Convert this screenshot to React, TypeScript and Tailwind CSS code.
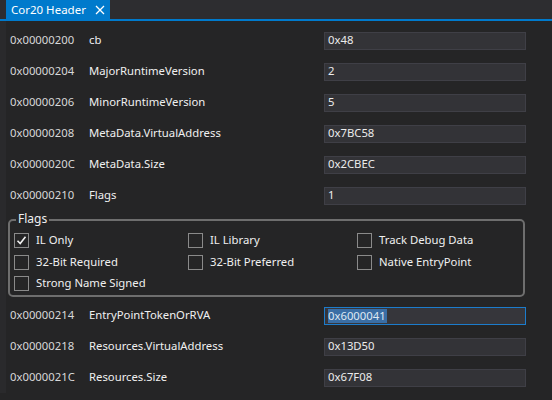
import React from "react";

const top = [
  ["0x00000200", "cb", "0x48"],
  ["0x00000204", "MajorRuntimeVersion", "2"],
  ["0x00000206", "MinorRuntimeVersion", "5"],
  ["0x00000208", "MetaData.VirtualAddress", "0x7BC58"],
  ["0x0000020C", "MetaData.Size", "0x2CBEC"],
  ["0x00000210", "Flags", "1"],
];
const bottom = [
  ["0x00000214", "EntryPointTokenOrRVA", "0x6000041"],
  ["0x00000218", "Resources.VirtualAddress", "0x13D50"],
  ["0x0000021C", "Resources.Size", "0x67F08"],
];

function Row({ r, selected }: { r: string[]; selected?: boolean }) {
  return (
    <div className="flex h-[31px] items-center">
      <div className="w-[83px] pl-[4px] text-[#d8d8d8]">{r[0]}</div>
      <div className="w-[235px] text-[#f0f0f0]">{r[1]}</div>
      <div
        className={
          "flex h-[18px] w-[202px] items-center border px-[3px] " +
          (selected ? "border-[#1c7ccc] bg-[#36363b]" : "border-[#3f3f46] bg-[#333337]")
        }
      >
        {selected ? (
          <span className="bg-[#3a6ea5] pr-[1px] leading-[14px] text-[#dfe8f2]">{r[2]}</span>
        ) : (
          <span className="text-[#ececec]">{r[2]}</span>
        )}
      </div>
    </div>
  );
}

function Check({ label, checked }: { label: string; checked?: boolean }) {
  return (
    <div className="flex h-[21.5px] items-center">
      <div className="flex h-[15px] w-[15px] items-center justify-center border border-[#8a8a8a]">
        {checked && (
          <svg width="11" height="11" viewBox="0 0 11 11">
            <path d="M1.5 5.8 L4.2 8.5 L9.5 1.8" stroke="#f0f0f0" strokeWidth="1.6" fill="none" />
          </svg>
        )}
      </div>
      <span className="ml-[7px] text-[#f0f0f0]">{label}</span>
    </div>
  );
}

export default function App() {
  return (
    <div
      className="relative h-[400px] w-[552px] overflow-hidden bg-[#252526] text-[11.3px]"
      style={{ fontFamily: '"Segoe UI", "Noto Sans", sans-serif' }}
    >
      <div className="flex h-[19px] bg-[#2d2d30]">
        <div className="w-[6px]" />
        <div className="flex w-[104px] items-center bg-[#007acc] pl-[5px] text-[11.5px] text-white">
          <span>Cor20 Header</span>
          <svg className="ml-[9px]" width="10" height="10" viewBox="0 0 10 10">
            <path d="M1 1 L9 9 M9 1 L1 9" stroke="#fff" strokeWidth="1.3" />
          </svg>
        </div>
      </div>
      <div className="h-[2px] bg-[#007acc]" />
      <div className="flex">
        <div className="w-[6px] self-stretch bg-[#2a2a2c]" />
        <div className="flex-1 pt-[4px]">
          {top.map((r) => (
            <Row key={r[0]} r={r} />
          ))}
          <div className="relative ml-[2px] mt-[8px] h-[78px] w-[517px] rounded-[5px] border-2 border-[#6e6e6e] pl-[4px] pt-[9px]">
            <span className="absolute left-[6px] top-[-11px] bg-[#252526] px-[2px] text-[12px] text-[#f0f0f0]">Flags</span>
            <div className="flex">
              <div className="w-[174px]">
                <Check label="IL Only" checked />
                <Check label="32-Bit Required" />
                <Check label="Strong Name Signed" />
              </div>
              <div className="w-[169px]">
                <Check label="IL Library" />
                <Check label="32-Bit Preferred" />
              </div>
              <div>
                <Check label="Track Debug Data" />
                <Check label="Native EntryPoint" />
              </div>
            </div>
          </div>
          <div className="mt-[3px]">
            {bottom.map((r, i) => (
              <Row key={r[0]} r={r} selected={i === 0} />
            ))}
          </div>
        </div>
      </div>
    </div>
  );
}
